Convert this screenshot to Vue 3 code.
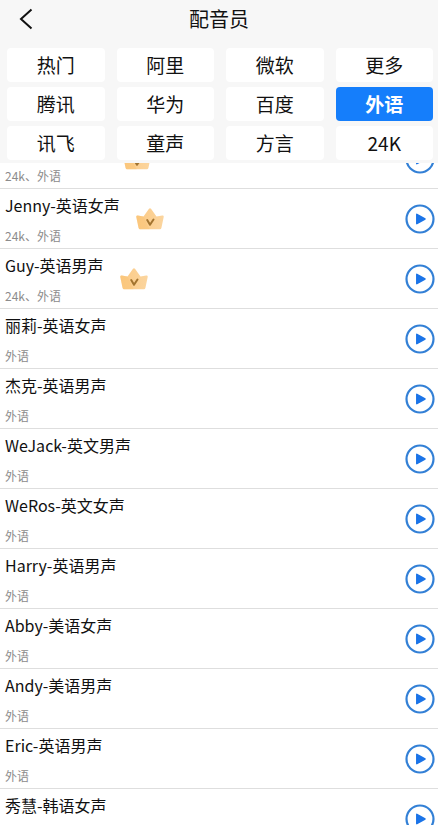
<script setup>
import { ref } from 'vue'

const categories = ['热门', '阿里', '微软', '更多', '腾讯', '华为', '百度', '外语', '讯飞', '童声', '方言', '24K']
const active = ref('外语')

const voices = [
  { name: '丽莎-英语女声', tags: '24k、外语', vip: true },
  { name: 'Jenny-英语女声', tags: '24k、外语', vip: true },
  { name: 'Guy-英语男声', tags: '24k、外语', vip: true },
  { name: '丽莉-英语女声', tags: '外语' },
  { name: '杰克-英语男声', tags: '外语' },
  { name: 'WeJack-英文男声', tags: '外语' },
  { name: 'WeRos-英文女声', tags: '外语' },
  { name: 'Harry-英语男声', tags: '外语' },
  { name: 'Abby-美语女声', tags: '外语' },
  { name: 'Andy-美语男声', tags: '外语' },
  { name: 'Eric-英语男声', tags: '外语' },
  { name: '秀慧-韩语女声', tags: '外语' },
]
</script>

<template>
  <div class="page">
    <header class="top">
      <div class="bar">
        <button class="back" type="button" aria-label="返回">
          <svg width="14" height="22" viewBox="0 0 14 22" fill="none" stroke="#111" stroke-width="2">
            <path d="M12.500 1.500 2 11l10.500 9.500" />
          </svg>
        </button>
        <h1 class="title">配音员</h1>
      </div>
      <nav class="tabs">
        <button
          v-for="c in categories"
          :key="c"
          type="button"
          class="tab"
          :class="{ active: c === active }"
          :aria-pressed="c === active"
          @click="active = c"
        >{{ c }}</button>
      </nav>
    </header>

    <ul class="list">
      <li v-for="v in voices" :key="v.name" class="row">
        <div class="info">
          <span class="name">{{ v.name }}</span>
          <span class="tags">{{ v.tags }}</span>
        </div>
        <svg v-if="v.vip" class="crown" width="28" height="22" viewBox="0 0 28 22">
          <defs>
            <linearGradient id="gold" x1="0" y1="0" x2="1" y2="0">
              <stop offset="0" stop-color="#fcca84" />
              <stop offset="1" stop-color="#fbd59f" />
            </linearGradient>
          </defs>
          <path
            d="M.3 9Q0 7.200 1.800 7.500L7.500 8.600 13 .8Q14-.2 15 .8L20.500 8.600 26.200 7.500Q28 7.200 27.700 9L25.400 20Q25 21.200 24 21.200H4Q3 21.200 2.600 20Z"
            fill="url(#gold)"
          />
          <path d="M7.500 8.600 13.500 21.200H4Q3 21.200 2.600 20L.3 9Q0 7.200 1.800 7.500Z" fill="#fabf6c" opacity=".35" />
          <path d="M11.200 12 14 16.800 17.500 11.500" fill="none" stroke="#a3742f" stroke-width="2" stroke-linecap="round" stroke-linejoin="round" />
        </svg>
        <button class="play" type="button" :aria-label="'试听 ' + v.name">
          <svg width="30" height="30" viewBox="0 0 30 30">
            <circle cx="15" cy="15" r="13.500" fill="#fff" stroke="#3380d6" stroke-width="2.200" />
            <path d="M11.800 10.300 20 15l-8.200 4.700Z" fill="#1b74e8" stroke="#1b74e8" stroke-width="1.500" stroke-linejoin="round" />
          </svg>
        </button>
      </li>
    </ul>
  </div>
</template>

<style>
body {
  background: #fff;
}
</style>

<style scoped>
.page {
  display: flex;
  flex-direction: column;
  height: 100vh;
  color: #111;
  font-family: "Noto Sans CJK SC", "Noto Sans", sans-serif;
}

button {
  margin: 0;
  padding: 0;
  border: 0;
  background: none;
  color: inherit;
  font: inherit;
  cursor: pointer;
}

svg {
  display: block;
}

.top {
  flex: none;
  padding-bottom: 3px;
  background: #f7f7f7;
}

.bar {
  display: grid;
  grid-template-columns: 48px 1fr 48px;
  align-items: center;
  height: 38px;
  margin-bottom: 10px;
}

.back {
  padding-left: 19px;
}

.title {
  margin: 0;
  font-size: 20px;
  font-weight: 400;
  line-height: 36px;
  text-align: center;
}

.tabs {
  display: grid;
  grid-template-columns: repeat(4, 1fr);
  gap: 5px 12px;
  padding: 0 5px 0 7px;
}

.tab {
  height: 34px;
  border-radius: 4px;
  background: #fff;
  font-size: 19px;
  line-height: 34px;
}

.tab.active {
  background: #157efb;
  color: #fff;
  font-weight: 700;
}

.list {
  flex: 1;
  min-height: 0;
  margin: 0;
  padding: 0;
  overflow-y: auto;
  scrollbar-width: none;
  list-style: none;
}

.row:first-child {
  margin-top: -34px;
}

.row {
  display: flex;
  align-items: center;
  height: 60px;
  padding: 0 3px 0 5px;
  box-sizing: border-box;
  border-bottom: 1px solid #dedede;
}

.info {
  display: flex;
  flex-direction: column;
  gap: 10px;
}

.name {
  font-size: 16px;
  line-height: 24px;
}

.tags {
  color: #8c8c8c;
  font-size: 12px;
  line-height: 18px;
}

.crown {
  margin-left: 16px;
}

.play {
  margin-left: auto;
}
</style>
